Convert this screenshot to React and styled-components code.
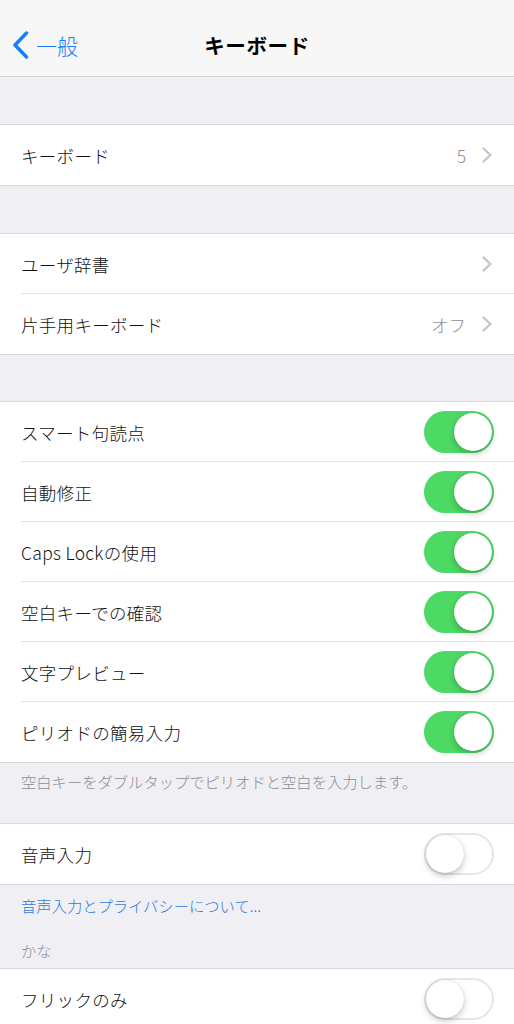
import React from "react";
import styled, { createGlobalStyle } from "styled-components";

const GlobalStyle = createGlobalStyle`
  body {
    margin: 0;
    background: #efeff4;
    font-family: "Noto Sans CJK JP", "Liberation Sans", sans-serif;
    -webkit-font-smoothing: antialiased;
  }
`;

const Page = styled.div`
  width: 514px;
  min-height: 1024px;
  background: #efeff4;
  overflow: hidden;
`;

const NavBar = styled.div`
  height: 62px;
  padding-top: 14px;
  background: #f7f7f8;
  border-bottom: 1px solid #d6d6da;
  display: grid;
  grid-template-columns: 1fr auto 1fr;
  align-items: center;
`;

const Back = styled.div`
  display: flex;
  align-items: center;
  gap: 7px;
  padding-left: 12px;
  color: #157efb;
  font-size: 21px;
  font-weight: 300;
`;

const Title = styled.div`
  font-size: 20.5px;
  font-weight: 700;
  color: #000;
  letter-spacing: 0.6px;
`;

const Gap = styled.div`
  height: ${(p) => p.h}px;
`;

const Group = styled.div`
  background: #fff;
  border-top: 1px solid #d8d8dc;
  border-bottom: 1px solid #d8d8dc;
`;

const Row = styled.div`
  position: relative;
  height: 60px;
  box-sizing: border-box;
  display: flex;
  align-items: center;
  padding: 0 21px;

  &:not(:last-child)::after {
    content: "";
    position: absolute;
    left: 21px;
    right: 0;
    bottom: 0;
    height: 1px;
    background: #e3e3e6;
  }
`;

const Label = styled.div`
  flex: 1;
  font-size: 17.5px;
  font-weight: 300;
  color: #111;
  letter-spacing: 0.3px;
  padding-top: 1px;
`;

const Value = styled.div`
  font-size: 17.5px;
  font-weight: 300;
  color: #8e8e93;
  margin-right: 16px;
`;

const Note = styled.div`
  padding: ${(p) => p.pad};
  font-size: 15.3px;
  font-weight: 300;
  line-height: 20px;
  color: ${(p) => (p.link ? "#2f7bdb" : "#8e8e93")};
`;

const SwitchTrack = styled.div`
  position: relative;
  width: 70px;
  height: 42px;
  box-sizing: border-box;
  border-radius: 21px;
  background: ${(p) => (p.on ? "#4cd964" : "#fff")};
  border: ${(p) => (p.on ? "none" : "2px solid #e6e6e9")};
  margin-right: -1px;
`;

const Knob = styled.div`
  position: absolute;
  top: ${(p) => (p.on ? 2 : 0)}px;
  left: ${(p) => (p.on ? 30 : 0)}px;
  width: 38px;
  height: 38px;
  border-radius: 50%;
  background: #fff;
  box-shadow: 0 3px 6px rgba(0, 0, 0, 0.22), 0 0 1px rgba(0, 0, 0, 0.2);
`;

const Chevron = () => (
  <svg width="11" height="16" viewBox="0 0 11 16">
    <path d="M1.5 1.5 L8.5 8 L1.5 14.5" fill="none" stroke="#c4c4c9" strokeWidth="2.2" strokeLinecap="round" strokeLinejoin="round" />
  </svg>
);

const BackIcon = () => (
  <svg width="17" height="28" viewBox="0 0 17 28">
    <path d="M14.5 2 L3 14 L14.5 26" fill="none" stroke="#157efb" strokeWidth="3.4" strokeLinecap="round" strokeLinejoin="round" />
  </svg>
);

const Switch = ({ on }) => (
  <SwitchTrack on={on}>
    <Knob on={on} />
  </SwitchTrack>
);

const toggles = ["スマート句読点", "自動修正", "Caps Lockの使用", "空白キーでの確認", "文字プレビュー", "ピリオドの簡易入力"];

const App = () => (
  <Page>
    <GlobalStyle />
    <NavBar>
      <Back>
        <BackIcon />
        <span>一般</span>
      </Back>
      <Title>キーボード</Title>
      <div />
    </NavBar>
    <Gap h={47} />
    <Group>
      <Row>
        <Label>キーボード</Label>
        <Value>5</Value>
        <Chevron />
      </Row>
    </Group>
    <Gap h={47} />
    <Group>
      <Row>
        <Label>ユーザ辞書</Label>
        <Chevron />
      </Row>
      <Row>
        <Label>片手用キーボード</Label>
        <Value>オフ</Value>
        <Chevron />
      </Row>
    </Group>
    <Gap h={46} />
    <Group>
      {toggles.map((t) => (
        <Row key={t}>
          <Label>{t}</Label>
          <Switch on />
        </Row>
      ))}
    </Group>
    <Note pad="8px 21px 32px">空白キーをダブルタップでピリオドと空白を入力します。</Note>
    <Group>
      <Row>
        <Label>音声入力</Label>
        <Switch on={false} />
      </Row>
    </Group>
    <Note link pad="10px 21px 25px">音声入力とプライバシーについて...</Note>
    <Note pad="0 21px 8px">かな</Note>
    <Group>
      <Row>
        <Label>フリックのみ</Label>
        <Switch on={false} />
      </Row>
    </Group>
  </Page>
);

export default App;
